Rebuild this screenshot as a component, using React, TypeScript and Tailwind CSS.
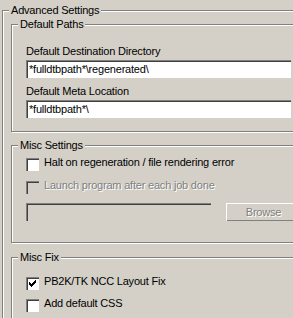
const font = "font-['Liberation_Sans',Arial,sans-serif] text-[11px] leading-[13px] tracking-[-0.2px]"

function Group({ title, className, children }: { title: string; className: string; children?: React.ReactNode }) {
  return (
    <div className={`relative border border-[#808080] shadow-[inset_1px_1px_0_#fff,1px_1px_0_#fff] ${className}`}>
      <div className="absolute left-[6px] top-[-7px] bg-[#d4d0c8] px-[2px] text-black whitespace-nowrap">{title}</div>
      {children}
    </div>
  )
}

function TextBox({ value, disabled, className }: { value?: string; disabled?: boolean; className: string }) {
  return (
    <div className={`h-[18px] border-t border-l border-[#808080] border-b-white border-r-white ${className}`}>
      <div className={`h-full border-t border-l border-[#404040] border-b-[#d4d0c8] border-r-[#d4d0c8] pl-[1px] pt-[1px] whitespace-nowrap overflow-hidden ${disabled ? 'bg-[#d4d0c8]' : 'bg-white'}`}>
        {value}
      </div>
    </div>
  )
}

const check = [
  [6, 0, 1],
  [5, 1, 2],
  [0, 2, 1],
  [4, 2, 3],
  [0, 3, 2],
  [3, 3, 3],
  [0, 4, 5],
  [1, 5, 3],
  [2, 6, 1],
]

function CheckBox({ label, checked, disabled, className }: { label: string; checked?: boolean; disabled?: boolean; className?: string }) {
  return (
    <div className={`flex h-[13px] items-start ${className ?? ''}`}>
      <div className="h-[13px] w-[13px] shrink-0 border-t border-l border-[#808080] border-b-white border-r-white">
        <div className={`h-full w-full border-t border-l border-[#404040] border-b-[#d4d0c8] border-r-[#d4d0c8] ${disabled ? 'bg-[#d4d0c8]' : 'bg-white'}`}>
          {checked && (
            <svg width="9" height="9" viewBox="0 0 9 9" shapeRendering="crispEdges">
              {check.map(([x, y, w], i) => (
                <rect key={i} x={x + 1} y={y + 1} width={w} height={1} fill="#000" />
              ))}
            </svg>
          )}
        </div>
      </div>
      <span
        className={`ml-[5px] -mt-[2px] whitespace-nowrap ${disabled ? 'text-[#808080] [text-shadow:1px_1px_0_#fff]' : 'text-black'}`}
      >
        {label}
      </span>
    </div>
  )
}

export default function App() {
  return (
    <div className={`h-[318px] w-[293px] overflow-hidden bg-[#d4d0c8] text-black ${font}`}>
      <Group title="Advanced Settings" className="ml-[2px] mt-[10px] h-[340px] w-[330px] pl-[8px] pt-[13px]">
        <Group title="Default Paths" className="h-[108px] w-[310px] pl-[14px] pt-[20px]">
          <div className="whitespace-nowrap">Default Destination Directory</div>
          <TextBox value="*fulldtbpath*\regenerated\" className="mt-[2px] w-[265px]" />
          <div className="mt-[7px] whitespace-nowrap">Default Meta Location</div>
          <TextBox value="*fulldtbpath*\" className="mt-[2px] w-[265px]" />
        </Group>

        <Group title="Misc Settings" className="mt-[13px] h-[98px] w-[310px] pl-[14px] pt-[12px]">
          <CheckBox label="Halt on regeneration / file rendering error" />
          <CheckBox label="Launch program after each job done" disabled className="mt-[10px]" />
          <div className="mt-[9px] flex items-start">
            <TextBox disabled className="w-[185px]" />
            <button
              disabled
              className="ml-[15px] h-[18px] w-[75px] border-t border-l border-white border-b-[#404040] border-r-[#404040]"
            >
              <div className="flex h-full items-center justify-center border-b border-r border-[#808080] border-t-[#d4d0c8] border-l-[#d4d0c8] text-[#808080] [text-shadow:1px_1px_0_#fff]">
                Browse
              </div>
            </button>
          </div>
        </Group>

        <Group title="Misc Fix" className="mt-[14px] h-[80px] w-[310px] pl-[14px] pt-[19px]">
          <CheckBox label="PB2K/TK NCC Layout Fix" checked />
          <CheckBox label="Add default CSS" className="mt-[9px]" />
        </Group>
      </Group>
    </div>
  )
}
